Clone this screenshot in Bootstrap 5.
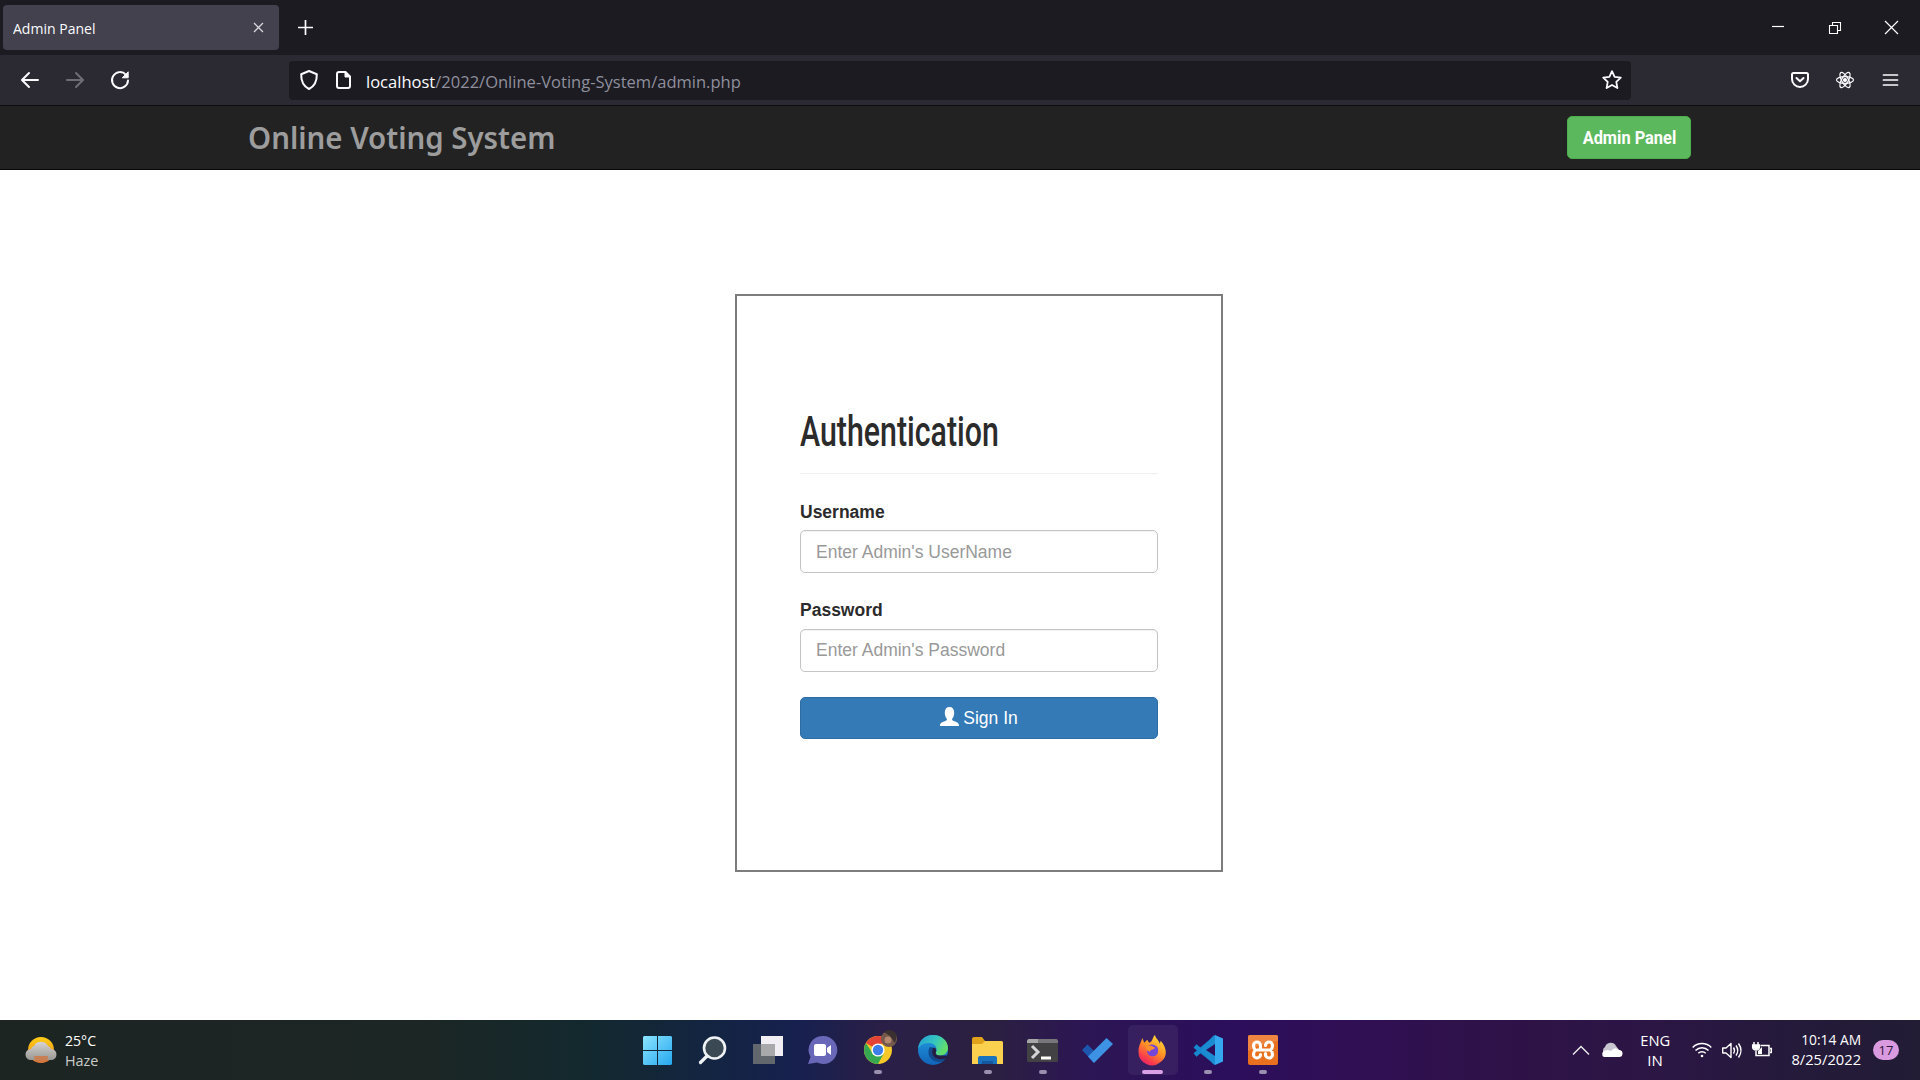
<!DOCTYPE html>
<html lang="en">
<head>
<meta charset="utf-8">
<title>Admin Panel</title>
<link href="https://cdn.jsdelivr.net/npm/bootstrap@5.3.0/dist/css/bootstrap.min.css" rel="stylesheet">
<style>
  body{width:1920px;height:1080px;overflow:hidden;font-family:"Liberation Sans",Arial,sans-serif;background:#fff}
  svg{display:block;flex:none;overflow:visible}
  .ui{font-family:"Open Sans","Noto Sans",sans-serif}
  .squeeze{display:inline-block;transform-origin:0 50%;white-space:nowrap}
  .line-icon{fill:none;stroke:#fbfbfe;stroke-width:2;stroke-linecap:round;stroke-linejoin:round}
  .tabstrip{height:55px;background:#1c1b22;padding-left:3px}
  .tab-item{width:276px;height:45px;background:#42414d;border-radius:4px;color:#fbfbfe;font-size:15px;padding:0 16px 0 10px}
  .tab-item .squeeze{padding-top:2px;transform:scaleX(.935)}
  .new-tab{margin-left:19px}
  .win-slot{width:56.5px}
  .toolbar{height:51px;background:#2b2a33;border-bottom:1px solid #0c0c0d;padding:0 7.5px}
  .tool-slot{width:45px}
  .urlbar{width:1342px;height:39px;background:#1c1b22;border-radius:4px;margin-left:146px;padding:0 9px 0 11px;font-size:17px;color:#8f8f9d}
  .url-text{margin-left:15px;padding-top:3px;transform:scaleX(.972)}
  .site-nav{height:64px;background:#222;border-bottom:1px solid #080808;padding:0 229px 0 248px}
  .brand-name{font-family:"Noto Sans",sans-serif;font-weight:600;font-size:30px;color:#9d9d9d;padding-bottom:1px;transform:scaleX(.98)}
  .btn-admin{width:124px;height:43px;background:#5cb85c;border:1px solid #4cae4c;border-radius:5px;color:#fff;font:700 18px Roboto,sans-serif}
  .btn-admin:hover{background:#5cb85c;color:#fff}
  .page-area{height:850px;padding:124px 0 0 735px}
  .login-box{width:488px;height:578px;border:2px solid #7d7d7d;padding:107px 63px 0}
  .login-title{font-family:Roboto,sans-serif;font-weight:500;font-size:42px;line-height:57px;color:#2b2b2b;height:56px}
  .login-rule{margin:14px 0 0;border-top:1px solid #eee;opacity:1}
  .field-label{font-size:17.5px;line-height:25px;font-weight:700;color:#2b2b2b}
  .login-box .form-control{height:43px;font-size:17.5px;border:1px solid #c4c4c4;border-radius:5px;padding:0 15px;box-shadow:inset 0 1px 1px rgba(0,0,0,.06)}
  .login-box .form-control::placeholder{color:#999}
  .btn-signin{height:42px;background:#337ab7;border:1px solid #2e6da4;border-radius:5px;color:#fff;font-size:17.5px;padding:0}
  .taskbar{height:60px;color:#fff;font-size:15px;line-height:20px;background:linear-gradient(90deg,#1d2523 0,#1c2624 420px,#13292f 590px,#132540 700px,#17204f 800px,#2a1f47 880px,#2b2040 990px,#2c1653 1080px,#2b0e5c 1230px,#300f55 1340px,#2f1248 1500px,#2b1644 1660px,#241a3a 1800px,#221c35 100%)}
  .weather{width:630px;padding-left:26px}
  .app-slot{width:55px;height:60px}
  .app-slot .active-tile{width:50px;height:50px;border-radius:5px;background:rgba(255,255,255,.06)}
  .app-slot.running::after{content:"";position:absolute;left:24px;bottom:6px;width:8px;height:4px;border-radius:2px;background:#9a8fae}
  .app-slot.focused::after{left:17px;width:21px;background:#d9a0e6}
  .count-badge{width:26px;height:20px;border-radius:10px;background:#d99ae0;color:#2a1738;font-size:13px}
</style>
<script src="https://cdn.jsdelivr.net/npm/bootstrap@5.3.0/dist/js/bootstrap.bundle.min.js"></script>
</head>
<body>
<!-- browser tabs -->
<div class="tabstrip ui d-flex align-items-center">
  <div class="tab-item d-flex align-items-center justify-content-between">
    <span class="squeeze">Admin Panel</span>
    <svg width="9" height="9" viewBox="0 0 9 9"><path d="M0 0 9 9M9 0 0 9" stroke="#d6d6dc" stroke-width="1.3"/></svg>
  </div>
  <svg class="new-tab" width="15" height="15" viewBox="0 0 15 15"><path d="M7.5 0V15M0 7.5H15" stroke="#fbfbfe" stroke-width="1.7"/></svg>
  <div class="d-flex ms-auto align-items-center">
    <div class="win-slot d-flex justify-content-center"><svg width="12" height="12"><path d="M-1 4.500H11" stroke="#fff" stroke-width="1.2"/></svg></div>
    <div class="win-slot d-flex justify-content-center"><svg width="12" height="12" fill="none" stroke="#fff" stroke-width="1.1"><path d="M.5 3.5H8.5V11.5H.5ZM3.5 3.5V.5H11.5V8.5H8.5"/></svg></div>
    <div class="win-slot d-flex justify-content-center"><svg width="13" height="13"><path d="M0 0 13 13M13 0 0 13" stroke="#fff" stroke-width="1.2"/></svg></div>
  </div>
</div>
<!-- address toolbar -->
<div class="toolbar d-flex align-items-center">
  <div class="tool-slot d-flex justify-content-center"><svg class="line-icon" width="18" height="16" viewBox="0 0 18 16"><path d="M17 8H1.5M8 1 1 8l7 7"/></svg></div>
  <div class="tool-slot d-flex justify-content-center"><svg class="line-icon" style="stroke:#6e6d77" width="18" height="16" viewBox="0 0 18 16"><path d="M1 8h15.5M10 1l7 7-7 7"/></svg></div>
  <div class="tool-slot d-flex justify-content-center"><svg class="line-icon" width="18" height="18" viewBox="0 0 18 18"><path d="M15 3.8A8 8 0 1 0 17 9.5"/><path d="M17.2 1.2v5.6h-5.6z" fill="#fbfbfe" stroke-width="1"/></svg></div>
  <div class="urlbar ui d-flex align-items-center">
    <svg class="line-icon" width="18" height="20" viewBox="0 0 18 20"><path d="M9 1 16.8 4.2C17 10.5 14.8 16 9 19 3.2 16 1 10.5 1.2 4.2Z"/></svg>
    <svg class="line-icon" style="margin-left:18px" width="15" height="18" viewBox="0 0 15 18"><path d="M3 1H9.5L14 5.5V15a2 2 0 0 1-2 2H3a2 2 0 0 1-2-2V3a2 2 0 0 1 2-2Z"/><path d="M9 1v5h5z" fill="#fbfbfe" stroke-width="1"/></svg>
    <span class="squeeze url-text"><span style="color:#fbfbfe">localhost</span>/2022/Online-Voting-System/admin.php</span>
    <svg class="line-icon ms-auto" style="stroke-width:1.8" width="20" height="20" viewBox="0 0 20 20"><path d="M10 1.2 12.6 6.8 18.8 7.6 14.3 11.8 15.4 18 10 15 4.6 18 5.7 11.8 1.2 7.6 7.4 6.8Z"/></svg>
  </div>
  <div class="d-flex ms-auto">
    <div class="tool-slot d-flex align-items-center justify-content-center"><svg class="line-icon" width="18" height="16" viewBox="0 0 18 16"><path d="M2.5 1h13A1.5 1.5 0 0 1 17 2.5V7A8 8 0 0 1 1 7V2.500A1.500 1.500 0 0 1 2.500 1ZM5.500 6 9 9.300 12.500 6"/></svg></div>
    <div class="tool-slot d-flex align-items-center justify-content-center"><svg class="line-icon" style="stroke-width:1.2" width="18" height="18" viewBox="-9 -9 18 18"><ellipse rx="8.500" ry="3.300"/><ellipse rx="8.500" ry="3.300" transform="rotate(60)"/><ellipse rx="8.500" ry="3.300" transform="rotate(120)"/><circle r="1.500" fill="#fff"/></svg></div>
    <div class="tool-slot d-flex align-items-center justify-content-center"><svg class="line-icon" style="stroke-width:1.7" width="15" height="12" viewBox="0 0 15 12"><path d="M.5 1h14M.5 6h14M.5 11h14"/></svg></div>
  </div>
</div>
<!-- site header -->
<nav class="site-nav d-flex align-items-center justify-content-between">
  <span class="brand-name squeeze">Online Voting System</span>
  <button class="btn btn-admin p-0"><span class="squeeze" style="transform-origin:50% 50%;transform:scaleX(.91)">Admin Panel</span></button>
</nav>
<!-- sign-in form -->
<main class="page-area">
  <form class="login-box">
    <h2 class="login-title m-0"><span class="squeeze" style="transform:scaleX(.722)">Authentication</span></h2>
    <hr class="login-rule">
    <div style="padding-top:26px;margin-bottom:25px">
      <label class="field-label d-block" style="margin-bottom:5px" for="user">Username</label>
      <input id="user" type="text" class="form-control" style="padding-top:1px" placeholder="Enter Admin's UserName">
    </div>
    <div style="margin-bottom:25px">
      <label class="field-label d-block" style="margin-bottom:6px" for="pass">Password</label>
      <input id="pass" type="password" class="form-control" placeholder="Enter Admin's Password">
    </div>
    <button type="button" class="btn btn-signin w-100 d-flex align-items-center justify-content-center">
      <svg width="19" height="19" viewBox="0 0 19 19" style="margin:-4px 4px 0 0"><path fill="#fff" d="M0 19c0-3 1.500-3.500 4-4.500 2-.8 3-1.200 3-2.500C5.500 10.500 4.800 8.500 4.800 5.500 4.800 2 6.500 0 9.500 0s4.700 2 4.700 5.500c0 3-.7 5-2.200 6.500 0 1.300 1 1.700 3 2.500 2.500 1 4 1.500 4 4.500Z"/></svg>
      <span>Sign In</span>
    </button>
  </form>
</main>
<!-- taskbar -->
<footer class="taskbar ui d-flex align-items-center">
  <div class="weather d-flex align-items-center">
    <svg width="29" height="28" viewBox="0 0 29 28"><defs><linearGradient id="sun" x2="0" y2="1"><stop stop-color="#ffcf18"/><stop offset=".5" stop-color="#f6a716"/><stop offset="1" stop-color="#dd702c"/></linearGradient><linearGradient id="haze" x2="0" y2="1"><stop stop-color="#d6d3d2"/><stop offset="1" stop-color="#9a9894"/></linearGradient></defs><circle cx="15" cy="14" r="13" fill="url(#sun)"/><path d="M5 24a5.500 5.500 0 0 1 0-11 4 4 0 0 1 3-3 8 8 0 0 1 14 0 4 4 0 0 1 3 3 5.500 5.500 0 0 1 0 11Z" fill="url(#haze)"/><path d="M8 20h14a13 13 0 0 1-1 5 12 12 0 0 1-12 0z" fill="#ce7947" opacity=".85"/></svg>
    <div style="margin-left:10px;margin-top:-1px"><div class="squeeze d-block" style="transform:scaleX(.94)">25°C</div><div class="squeeze d-block" style="transform:scaleX(.96);color:#c9cccb">Haze</div></div>
  </div>
  <div class="d-flex">
    <div class="app-slot d-flex align-items-center justify-content-center"><svg width="29" height="29" viewBox="0 0 29 29"><defs><linearGradient id="win" x2="1" y2="1"><stop stop-color="#8be4ff"/><stop offset="1" stop-color="#26a8ee"/></linearGradient></defs><path fill="url(#win)" d="M1 0H14V14H0V1ZM15 0H28L29 1V14H15ZM0 15H14V29H1L0 28ZM15 15H29V28L28 29H15Z"/></svg></div>
    <div class="app-slot d-flex align-items-center justify-content-center"><svg width="27" height="28" viewBox="0 0 27 28"><circle cx="15.500" cy="12" r="10.500" fill="#3b4954" stroke="#f0f3f5" stroke-width="2.600"/><path d="m8 20-6.500 6.500" stroke="#f0f3f5" stroke-width="3.200" stroke-linecap="round"/></svg></div>
    <div class="app-slot d-flex align-items-center justify-content-center"><svg width="30" height="28" viewBox="0 0 30 28"><path fill="#f1eff4" d="M8 0H30V20H8Z"/><path fill="#62666d" d="M0 8H22V28H0Z"/><path fill="#a9a9ac" d="M8 8H22V20H8Z"/></svg></div>
    <div class="app-slot d-flex align-items-center justify-content-center"><svg width="29" height="28" viewBox="0 0 29 28"><path fill="#6967b8" d="M15 0a14 14 0 1 1-6 26.500L0 28l2.500-7A14 14 0 0 1 15 0Z"/><rect x="6" y="8" width="12" height="12" rx="2" fill="#fff"/><path fill="#fff" d="m19 12 4-3v10l-4-3z"/></svg></div>
    <div class="app-slot running position-relative d-flex align-items-center justify-content-center"><svg width="28" height="28" viewBox="-14 -14 28 28"><circle r="14" fill="#f7c928"/><path fill="#e44236" d="M0 0-12.100-7A14 14 0 0 1 12.100-7L0-6Z"/><path fill="#36a852" d="M-12.100-7A14 14 0 0 0 0 14L6 3 0 0-5.500 3Z"/><circle r="6.600" fill="#fff"/><circle r="5.200" fill="#3d7eea"/><circle cx="11" cy="-11" r="8" fill="#74594c"/><path d="M6-18q7-5 13 3l-2 8-5-7z" fill="#3a302f"/><circle cx="10" cy="-10" r="3.500" fill="#b38a70"/></svg></div>
    <div class="app-slot d-flex align-items-center justify-content-center"><svg width="30" height="30" viewBox="0 0 30 30"><defs><linearGradient id="edgeTop" x2="1" y2=".4"><stop stop-color="#249dd8"/><stop offset=".6" stop-color="#36c6bd"/><stop offset="1" stop-color="#62dd6a"/></linearGradient><linearGradient id="edgeLow" x2="0" y2="1"><stop stop-color="#229be0"/><stop offset="1" stop-color="#1263b8"/></linearGradient></defs><circle cx="15" cy="15" r="15" fill="url(#edgeLow)"/><path fill="url(#edgeTop)" d="M0 14C1 5 7 0 15 0c9 0 15 6 15 13 0 5-4 7.500-8 7.500-3 0-5-1-4-3C20 13 17 8 11 8 6 8 2 10 0 14Z"/><path fill="#12488c" d="M12 12c-4 6 0 15 9 15 3 0 5-1 7-4-9 3-14-1-14-6 0-2 1-3 2-4z"/><path fill="#271d42" d="M15 13c2-1 4 1 3 4-1 2 1 3.500 4 3.500h8l-2 3c-7 2-14 0-14-7Z"/></svg></div>
    <div class="app-slot running position-relative d-flex align-items-center justify-content-center"><svg width="31" height="27" viewBox="0 0 31 27"><path fill="#e0a21b" d="M0 2Q0 0 2 0H10L13 4H29Q31 4 31 6V12H0Z"/><path fill="#fbd04e" d="M0 7H10L13 4H29Q31 4 31 6V27H0Z"/><path fill="#1974bd" d="M6 27V21Q6 19 8 19H23Q25 19 25 21V27Z"/><path fill="#1658a0" d="M10 24H21V27H10Z"/></svg></div>
    <div class="app-slot running position-relative d-flex align-items-center justify-content-center"><svg width="31" height="23" viewBox="0 0 31 23"><rect width="31" height="23" rx="1.500" fill="#424244"/><path fill="#a7a7aa" d="M1.500 0H11V4H0V1.500Z"/><path fill="#77777b" d="M11 0H29.500L31 1.500V4H11Z"/><path d="m5 7 6 6-6 6" fill="none" stroke="#d4d4d7" stroke-width="3"/><path d="M14 19H24" stroke="#fff" stroke-width="3"/></svg></div>
    <div class="app-slot d-flex align-items-center justify-content-center"><svg width="31" height="25" viewBox="0 0 31 25"><path fill="#1d56ae" d="m0 12 5.500-5.500L17 18l-5.500 6.500Z"/><path fill="#3e92e4" d="M24.500 0 31 6 12 25 6 18.500Z"/></svg></div>
    <div class="app-slot running focused position-relative d-flex align-items-center justify-content-center"><div class="active-tile d-flex align-items-center justify-content-center"><svg width="29" height="29" viewBox="0 0 29 30" style="margin-top:-2px"><defs><linearGradient id="fox" x1=".8" x2=".2" y2="1"><stop stop-color="#ffe23a"/><stop offset=".45" stop-color="#ff9325"/><stop offset=".8" stop-color="#fb3c4c"/><stop offset="1" stop-color="#e21f71"/></linearGradient></defs><path fill="url(#fox)" d="M4 3 6 8 9 5 11 8C15 7 14 3 17 0c1 4 4 5 5 9l1-3c8 9 6 18 0 22A14 14 0 0 1 0 17C0 11 2 9 4 3Z"/><path fill="#7546d8" d="M9 12c2-3 7-3 10 0 3 4 1 10-4 10-4 0-7-3-6-7l4-1Z"/><path fill="#ff8f2a" d="M8 11c4-1 6 1 9 2-1 3-4 1-5 4-3 0-5-3-4-6Z"/></svg></div></div>
    <div class="app-slot running position-relative d-flex align-items-center justify-content-center"><svg width="30" height="30" viewBox="0 0 30 30"><path d="M2 11 22 27M2 20 22 3" stroke="#1688d0" stroke-width="4.500"/><path fill="#35a7ee" d="M22 0 30 3.500V26.500L22 30Z"/><path fill="#1b8bd2" d="m20 1 2-1v9l-9 6 9 6v9l-2-1L8 15Z"/></svg></div>
    <div class="app-slot running position-relative d-flex align-items-center justify-content-center"><svg width="30" height="30" viewBox="0 0 30 30"><rect width="30" height="30" rx="2" fill="#e8701f"/><path d="M0 2Q0 0 2 0H28Q30 0 30 2V6Q15 8 0 16Z" fill="#ee8540"/><path d="M12.500 15V10.500A3.500 3.500 0 0 0 5.500 10.500Q5.500 13.500 7.500 15 5.500 16.500 5.500 19.500A3.500 3.500 0 0 0 12.500 19.500M9.500 15H22.500M17.500 10.500A3.500 3.500 0 0 1 24.500 10.500Q24.500 13.500 22.500 15 24.500 16.500 24.500 19.500A3.500 3.500 0 0 1 17.500 19.500V18.500" fill="none" stroke="#fff" stroke-width="3.200" stroke-linecap="round" stroke-linejoin="round"/></svg></div>
  </div>
  <div class="d-flex align-items-center ms-auto" style="padding-right:21px">
    <svg width="16" height="9" viewBox="0 0 16 9"><path d="m0 8.500 8-8 8 8" fill="none" stroke="#eee" stroke-width="1.400"/></svg>
    <svg style="margin-left:12px" width="21" height="14" viewBox="0 0 21 14"><path fill="#c9c5d0" d="M4 11a4 4 0 0 1 0-7 6 6 0 0 1 11-1l3 4-8 5z"/><path fill="#fff" d="M3 14a3.500 3.500 0 0 1 1-6.500q3-1 6 .5 4-5 8-1a3.500 3.500 0 0 1 0 7Z"/></svg>
    <div class="text-center" style="margin-left:17px;width:32px"><div class="squeeze" style="transform-origin:50%;transform:scaleX(.98)">ENG</div><div>IN</div></div>
    <svg style="margin-left:21px" width="20" height="16" viewBox="0 0 20 16" fill="none" stroke="#fff" stroke-width="1.500"><path d="M.7 5.500a13 13 0 0 1 18.600 0M3.500 8.500a9 9 0 0 1 13 0M6.300 11.300a5.200 5.200 0 0 1 7.400 0"/><circle cx="10" cy="14" r="1.300" fill="#fff" stroke="none"/></svg>
    <svg style="margin-left:10px" width="20" height="17" viewBox="0 0 20 17" fill="none" stroke="#fff" stroke-width="1.400" stroke-linejoin="round"><path d="M.7 6H4L9 1.500v14L4 11H.7ZM11.500 5.500q2 3 0 6M14 3.500q3.500 5 0 10M16.500 1.500q5 7 0 14"/></svg>
    <svg style="margin:-2px 0 0 10px" width="20" height="15" viewBox="0 0 20 15" fill="none" stroke="#fff" stroke-width="1.500"><path d="M8.500 3.500H17V13.500H4V9M18 6.500h1.300V10.500H18M2 0v3M6 0v3M.7 3H7.300V5.500Q7 8 4 8 1 8 .7 5.500Z"/><path fill="#fff" stroke="none" d="M1 3h6v3L4 8 1 6zM6 9l4-4v7H6z"/></svg>
    <div class="text-end" style="width:89px;margin-top:-2px"><div class="squeeze" style="transform-origin:100%;transform:scaleX(.92)">10:14 AM</div><div class="squeeze" style="transform-origin:100%;transform:scaleX(.98)">8/25/2022</div></div>
    <div class="count-badge d-flex align-items-center justify-content-center" style="margin-left:12px">17</div>
  </div>
</footer>
</body>
</html>
